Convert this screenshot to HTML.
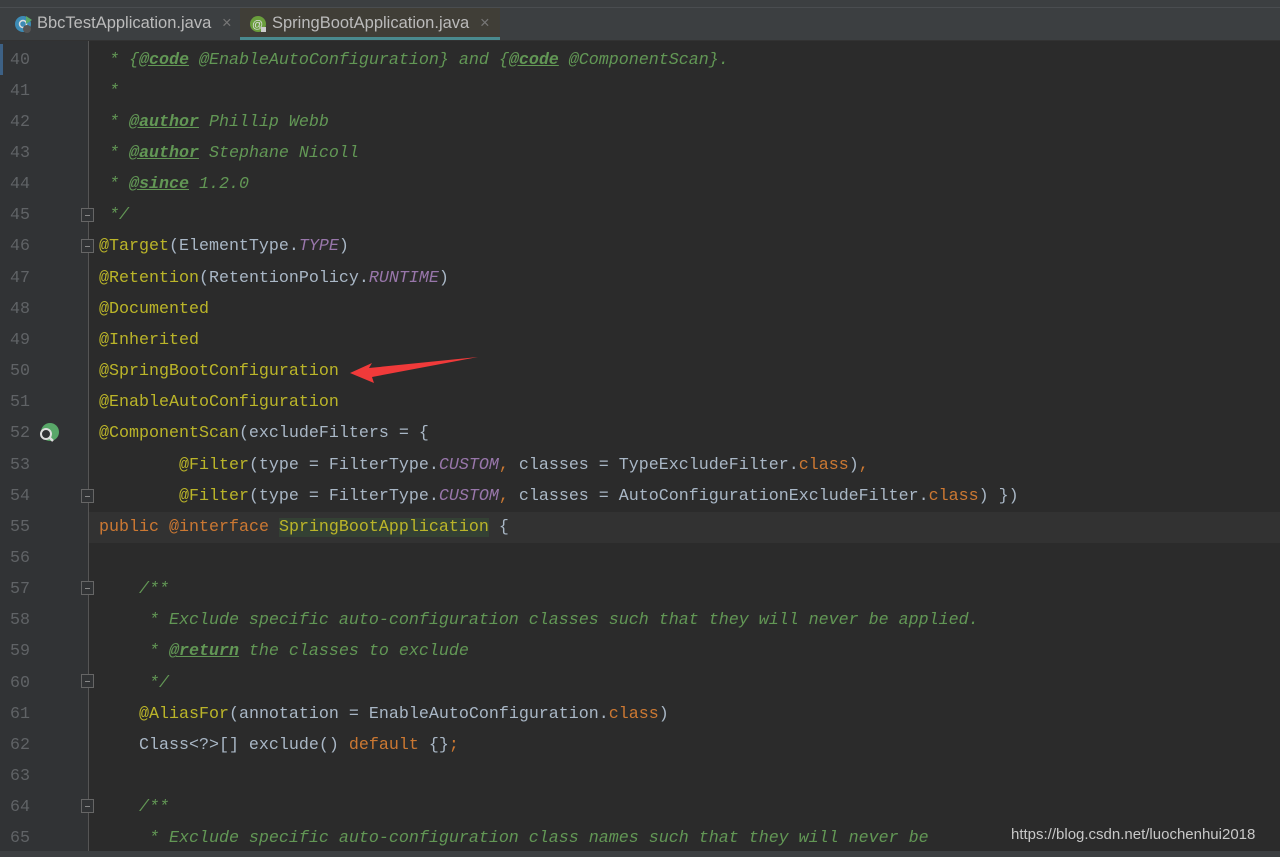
<!DOCTYPE html><html><head><meta charset="utf-8"><style>
body{margin:0;width:1280px;height:857px;overflow:hidden;background:#2b2b2b;position:relative;font-family:"Liberation Mono",monospace}
.top{position:absolute;left:0;top:0;width:1280px;height:40px;background:#3c3f41;border-bottom:1px solid #323232}
.top .ln{position:absolute;left:0;top:7px;width:1280px;height:1px;background:#4a4d50}
.tab{position:absolute;top:8px;height:31px;font:16.5px "Liberation Sans",sans-serif;color:#bbbbbb;line-height:31px}
.gut{position:absolute;left:0;top:41px;width:88px;height:816px;background:#313335}
.gl{position:absolute;left:88px;top:41px;width:1px;height:816px;background:#555}
.code{position:absolute;left:0;top:44.5px;width:1280px}
.r{height:31.16px;line-height:31.16px;position:relative;white-space:pre;font-size:16.67px;color:#a9b7c6}
.n{position:absolute;left:10px;color:#606366;width:40px}
.t{position:absolute;left:99px}
.c{color:#629755;font-style:italic}
.g{color:#629755;font-style:italic;font-weight:bold;text-decoration:underline}
.a{color:#bbb529}.k{color:#cc7832}.p{color:#9876aa;font-style:italic}
.cur{background:#323232}
.fold{position:absolute;left:81px;width:13px;height:14px;border:1px solid #666;box-sizing:border-box;background:#313335}
.fold:after{content:"";position:absolute;left:3px;top:6px;width:5px;height:1px;background:#888}
</style></head><body>
<div class="top"><div class="ln"></div></div>
<div class="tab" style="left:4px;width:232px">
<svg style="position:absolute;left:10px;top:6px" width="20" height="20"><circle cx="9" cy="10" r="8" fill="#3d8bb5"/><circle cx="9" cy="10" r="3.5" fill="none" stroke="#ddd" stroke-width="1.5"/><path d="M12 2l6 4-6 4z" fill="#59a869"/><circle cx="13" cy="15" r="4" fill="#555"/></svg>
<span style="position:absolute;left:33px">BbcTestApplication.java</span><span style="position:absolute;left:218px;color:#777">×</span></div>
<div class="tab" style="left:240px;width:260px;background:#403e37;border-bottom:3px solid #4a8a8e;height:29px">
<svg style="position:absolute;left:9px;top:6px" width="20" height="20"><circle cx="9" cy="10" r="8" fill="#6a9e3c"/><text x="3" y="14" font-size="11" fill="#ddd" font-family="Liberation Sans">@</text><rect x="12" y="13" width="5" height="5" fill="#ccc"/></svg>
<span style="position:absolute;left:32px">SpringBootApplication.java</span><span style="position:absolute;left:240px;color:#777">×</span></div>
<div class="gut"></div><div class="gl"></div>
<div style="position:absolute;left:0;top:44px;width:3px;height:31px;background:#3d6185"></div>
<div class="code">
<div class="r"><span class="n">40</span><span class="t c"> * {<span class="g">@code</span> @EnableAutoConfiguration} and {<span class="g">@code</span> @ComponentScan}.</span></div>
<div class="r"><span class="n">41</span><span class="t c"> *</span></div>
<div class="r"><span class="n">42</span><span class="t c"> * <span class="g">@author</span> Phillip Webb</span></div>
<div class="r"><span class="n">43</span><span class="t c"> * <span class="g">@author</span> Stephane Nicoll</span></div>
<div class="r"><span class="n">44</span><span class="t c"> * <span class="g">@since</span> 1.2.0</span></div>
<div class="r"><span class="n">45</span><span class="t c"> */</span></div>
<div class="r"><span class="n">46</span><span class="t"><span class="a">@Target</span>(ElementType.<span class="p">TYPE</span>)</span></div>
<div class="r"><span class="n">47</span><span class="t"><span class="a">@Retention</span>(RetentionPolicy.<span class="p">RUNTIME</span>)</span></div>
<div class="r"><span class="n">48</span><span class="t"><span class="a">@Documented</span></span></div>
<div class="r"><span class="n">49</span><span class="t"><span class="a">@Inherited</span></span></div>
<div class="r"><span class="n">50</span><span class="t"><span class="a">@SpringBootConfiguration</span></span></div>
<div class="r"><span class="n">51</span><span class="t"><span class="a">@EnableAutoConfiguration</span></span></div>
<div class="r"><span class="n">52</span><span class="t"><span class="a">@ComponentScan</span>(excludeFilters = {</span></div>
<div class="r"><span class="n">53</span><span class="t">        <span class="a">@Filter</span>(type = FilterType.<span class="p">CUSTOM</span><span class="k">,</span> classes = TypeExcludeFilter.<span class="k">class</span>)<span class="k">,</span></span></div>
<div class="r"><span class="n">54</span><span class="t">        <span class="a">@Filter</span>(type = FilterType.<span class="p">CUSTOM</span><span class="k">,</span> classes = AutoConfigurationExcludeFilter.<span class="k">class</span>) })</span></div>
<div class="r"><div class="cur" style="position:absolute;left:89px;right:0;top:0;bottom:0"></div><span class="n">55</span><span class="t"><span class="k">public</span> <span class="k">@interface</span> <span style="color:#bbb529;background:#344134">SpringBootApplication</span> {</span></div>
<div class="r"><span class="n">56</span></div>
<div class="r"><span class="n">57</span><span class="t c">    /**</span></div>
<div class="r"><span class="n">58</span><span class="t c">     * Exclude specific auto-configuration classes such that they will never be applied.</span></div>
<div class="r"><span class="n">59</span><span class="t c">     * <span class="g">@return</span> the classes to exclude</span></div>
<div class="r"><span class="n">60</span><span class="t c">     */</span></div>
<div class="r"><span class="n">61</span><span class="t">    <span class="a">@AliasFor</span>(annotation = EnableAutoConfiguration.<span class="k">class</span>)</span></div>
<div class="r"><span class="n">62</span><span class="t">    Class&lt;?&gt;[] exclude() <span class="k">default</span> {}<span class="k">;</span></span></div>
<div class="r"><span class="n">63</span></div>
<div class="r"><span class="n">64</span><span class="t c">    /**</span></div>
<div class="r"><span class="n">65</span><span class="t c">     * Exclude specific auto-configuration class names such that they will never be</span></div>
</div>
<div class="fold" style="top:208px"></div>
<div class="fold" style="top:239px"></div>
<div class="fold" style="top:489px"></div>
<div class="fold" style="top:581px"></div>
<div class="fold" style="top:674px"></div>
<div class="fold" style="top:799px"></div>
<svg style="position:absolute;left:37px;top:422px" width="24" height="24"><circle cx="13" cy="10" r="9" fill="#59a869"/><circle cx="9" cy="12" r="5" fill="#313335" stroke="#ddd" stroke-width="2"/><path d="M12 15l4 4" stroke="#ddd" stroke-width="2.5"/></svg>
<svg style="position:absolute;left:0;top:0" width="1280" height="857"><polygon points="350,373 372,363 369,368 478,357 372,377 374,383" fill="#f03a3a"/></svg>
<div style="position:absolute;left:0;top:851px;width:1280px;height:6px;background:#3c3f41"></div>
<div style="position:absolute;left:1011px;top:826px;font:15px 'Liberation Sans',sans-serif;color:#c8c8c8">https://blog.csdn.net/luochenhui2018</div>
</body></html>
